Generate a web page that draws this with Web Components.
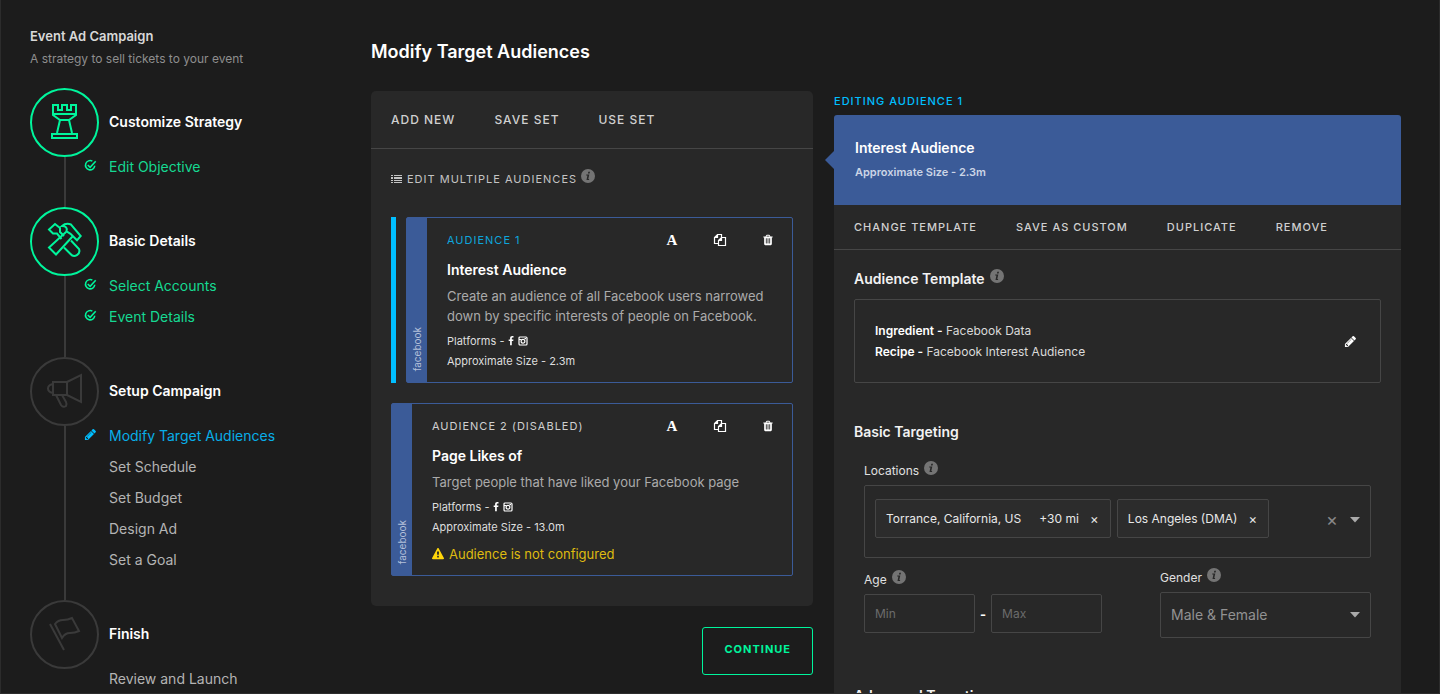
<!DOCTYPE html>
<html lang="en">
<head>
<meta charset="utf-8">
<meta name="viewport" content="width=device-width, initial-scale=1">
<title>Modify Target Audiences</title>
<style>
  :root {
    --bg: #1c1c1c;
    --panel: #282828;
    --line: #464646;
    --text: #c4c4c4;
    --muted: #8e8e8e;
    --green: #00f59c;
    --green-text: #16d992;
    --blue: #00bfff;
    --facebook: #3b5b98;
    --warn: #ffd60a;
  }

  body {
    margin: 0;
    background: var(--bg);
    color: var(--text);
    font: 13px/20px Inter, "Liberation Sans", sans-serif;
  }
</style>
</head>
<body>

<campaign-layout>
  <campaign-steps slot="steps" heading="Event Ad Campaign" summary="A strategy to sell tickets to your event">
    <step-group icon="rook" heading="Customize Strategy" done>
      <step-link state="done">Edit Objective</step-link>
    </step-group>
    <step-group icon="tools" heading="Basic Details" done>
      <step-link state="done">Select Accounts</step-link>
      <step-link state="done">Event Details</step-link>
    </step-group>
    <step-group icon="megaphone" heading="Setup Campaign">
      <step-link state="active">Modify Target Audiences</step-link>
      <step-link>Set Schedule</step-link>
      <step-link>Set Budget</step-link>
      <step-link>Design Ad</step-link>
      <step-link>Set a Goal</step-link>
    </step-group>
    <step-group icon="flag" heading="Finish">
      <step-link>Review and Launch</step-link>
    </step-group>
  </campaign-steps>

  <audience-list slot="list">
    <audience-card label="Audience 1" heading="Interest Audience" size="2.3m" selected>
      Create an audience of all Facebook users narrowed down by specific interests of people on Facebook.
    </audience-card>
    <audience-card label="Audience 2 (Disabled)" heading="Page Likes of" size="13.0m" warning="Audience is not configured">
      Target people that have liked your Facebook page
    </audience-card>
  </audience-list>

  <audience-editor slot="editor" label="Editing Audience 1" heading="Interest Audience" size="2.3m"></audience-editor>
</campaign-layout>

<script>
// ─── Icons ────────────────────────────────────────────────────────────────────

const ICONS = {
  // step icons, drawn on the 69px step circle
  rook: { box: "0 0 69 69", line: 2, body: `
    <path d="M23 17h5v5h4v-5h5v5h4v-5h5v10l-7 5h-9l-7-5z"/>
    <path d="M23 26h23M30 32l-3 13M39 32l3 13M22 46h25v4H22z"/>` },
  tools: { box: "0 0 69 69", line: 2, body: `
    <path d="M34 29l-4-4v-4l-5-4-6 5.500 4 4h4l4.500 5.500"/>
    <path d="M36 25L19 40.500l7 7L42.500 29.500M32 19q4-3.500 9-1.500l9.700 11.500-3.700 4.300-6.500-6.500-4-2.500q1.500-5-4.500-5.300z"/>
    <path d="M34 40.500l6.500 6.500a5 5 0 0 0 8.500-5l-8-8.500"/>` },
  megaphone: { box: "0 0 69 69", line: 2, body: `
    <path d="M23 25h14v13H23zM37 25l14-7v27l-14-7M23 27q-5 1-5 4.500t5 4.500"/>
    <path d="M26 38l5 10q2 3 5 1 1-2 0-4l-4-7"/>` },
  flag: { box: "0 0 69 69", line: 2, body: `
    <path d="M20 24l14 26M25 24q3-4 8-4t9-2l7 13q-4 2-9 2t-8 5z"/>` },

  check: { box: "0 0 14 14", line: 1.7, body: `
    <path d="M9 2.300a5 5 0 1 0 2.600 5M4 6.500l2.600 2.500 6-6.500"/>` },
  copy: { box: "0 0 14 14", line: 1.2, body: `
    <path d="M5.500 10.500h-4V4.500l3-3h4v3M4.500 1.500v3h-3"/>
    <path d="M5.500 7.500l3-3h4v8h-7zM8.500 4.500v3h-3"/>` },

  list: { box: "0 0 12 10", body: `
    <path d="M0 1h2v1H0zM0 3h2v2H0zM0 6h2v1H0zM0 8h2v1H0zM3 1h8v1H3zM3 3h8v2H3zM3 6h8v1H3zM3 8h8v1H3z"/>` },
  info: { box: "0 0 14 14", body: `
    <circle cx="7" cy="7" r="7"/>
    <path fill="#282828" d="M7.300 2.700h1.700l-.4 1.700H6.900zM5.300 5.500h3l-1 4.400h.9l-.2 1H5.500l.9-4.400h-1.200z"/>` },
  caret: { box: "0 0 10 6", body: `<path d="M0 0h10L5 5.500z"/>` },
  facebook: { box: "0 0 1792 1792", body: `
    <path d="M1343 12v264h-157q-86 0-116 36t-30 108v189h293l-39 296h-254v759h-306v-759h-255v-296h255v-218q0-186 104-288.500t277-102.500q147 0 228 12z"/>` },
  instagram: { box: "0 0 10 10", line: 1.2, body: `
    <rect x="1" y="1" width="8" height="8" rx="1"/>
    <circle cx="5" cy="5.300" r="1.900"/>
    <path d="M1 3.500h2.500M6.500 2.600H8"/>` },
  pencil: { box: "0 0 1792 1792", body: `
    <path d="M491 1536l91-91-235-235-91 91v107h128v128h107zm523-928q0-22-22-22-10 0-17 7l-542 542q-7 7-7 17 0 22 22 22 10 0 17-7l542-542q7-7 7-17zm-54-192l416 416-832 832h-416v-416zm683 96q0 53-37 90l-166 166-416-416 166-165q36-38 90-38 53 0 91 38l235 234q37 39 37 91z"/>` },
  trash: { box: "0 0 1792 1792", body: `
    <path d="M704 1376v-704q0-14-9-23t-23-9h-64q-14 0-23 9t-9 23v704q0 14 9 23t23 9h64q14 0 23-9t9-23zm256 0v-704q0-14-9-23t-23-9h-64q-14 0-23 9t-9 23v704q0 14 9 23t23 9h64q14 0 23-9t9-23zm256 0v-704q0-14-9-23t-23-9h-64q-14 0-23 9t-9 23v704q0 14 9 23t23 9h64q14 0 23-9t9-23zm-544-992h448l-48-117q-7-9-17-11h-317q-10 2-17 11zm928 32v64q0 14-9 23t-23 9h-96v948q0 83-47 143.500t-113 60.500h-832q-66 0-113-58.500t-47-141.500v-952h-96q-14 0-23-9t-9-23v-64q0-14 9-23t23-9h309l70-167q15-37 54-63t79-26h320q40 0 79 26t54 63l70 167h309q14 0 23 9t9 23z"/>` },
  warning: { box: "0 0 1792 1792", body: `
    <path d="M1024 1375v-190q0-14-9.500-23.500t-22.500-9.500h-192q-13 0-22.500 9.500t-9.500 23.500v190q0 14 9.500 23.500t22.500 9.500h192q13 0 22.500-9.500t9.500-23.500zm-2-374l18-459q0-12-10-19-13-11-24-11h-220q-11 0-24 11-10 7-10 21l17 457q0 10 10 16.500t24 6.500h185q14 0 23.500-6.500t10.500-16.500zm-14-934l768 1408q35 63-2 126-17 29-46.500 46t-63.500 17h-1536q-34 0-63.500-17t-46.500-46q-37-63-2-126l768-1408q17-31 47-49t65-18 65 18 47 49z"/>` },
};

/** use <ui-icon name="trash"></ui-icon>, sized with --icon-width / --icon-height */
class UiIcon extends HTMLElement {
  constructor() {
    super();
    this.attachShadow({ mode: "open" });
  }

  connectedCallback() {
    const icon = ICONS[this.getAttribute("name")];
    if (!icon) return;

    const paint = icon.line
      ? `fill="none" stroke="currentColor" stroke-width="${icon.line}"`
      : `fill="currentColor"`;

    this.shadowRoot.innerHTML = `
      <style>
        :host { display: inline-flex; flex-shrink: 0; }
        svg {
          display: block;
          width: var(--icon-width, 14px);
          height: var(--icon-height, var(--icon-width, 14px));
        }
      </style>
      <svg viewBox="${icon.box}" ${paint} aria-hidden="true">${icon.body}</svg>
    `;
  }
}

/** grey "i" that sits a little above the text before it */
class InfoTip extends HTMLElement {
  constructor() {
    super();
    this.attachShadow({ mode: "open" });
    this.shadowRoot.innerHTML = `
      <style>
        :host { display: inline-flex; align-self: flex-start; color: #747474; }
      </style>
      <ui-icon name="info"></ui-icon>
    `;
  }
}

// ─── Page frame ───────────────────────────────────────────────────────────────

class CampaignLayout extends HTMLElement {
  constructor() {
    super();
    this.attachShadow({ mode: "open" });
    this.shadowRoot.innerHTML = `
      <style>
        :host {
          box-sizing: border-box;
          display: grid;
          grid-template-columns: 320px minmax(0, 442fr) minmax(0, 567fr);
          column-gap: 21px;
          height: 100vh;
          padding: 0 38px 0 29px;
          border: 1px solid #2c2c2c;
          border-top: 0;
          overflow: hidden;
        }
      </style>
      <slot name="steps"></slot>
      <slot name="list"></slot>
      <slot name="editor"></slot>
    `;
  }
}

// ─── Steps ────────────────────────────────────────────────────────────────────

class CampaignSteps extends HTMLElement {
  constructor() {
    super();
    this.attachShadow({ mode: "open" });
  }

  connectedCallback() {
    this.shadowRoot.innerHTML = `
      <style>
        :host { display: block; padding-top: 26px; }
        h2, p { margin: 0; }
        h2 { font-size: 13px; font-weight: 600; color: #d8d8d8; }
        p { margin: 3px 0 19px; font-size: 12px; color: var(--muted); }
      </style>
      <h2>${this.getAttribute("heading")}</h2>
      <p>${this.getAttribute("summary")}</p>
      <nav><slot></slot></nav>
    `;
  }
}

class StepGroup extends HTMLElement {
  constructor() {
    super();
    this.attachShadow({ mode: "open" });
  }

  connectedCallback() {
    // the links start under the right edge of the circle, so both share column 2
    this.shadowRoot.innerHTML = `
      <style>
        :host {
          display: grid;
          grid-template-columns: 54px 25px 1fr;
          grid-template-rows: 63px auto;
          color: #3a3a3a;
        }
        :host([done]) { color: var(--green); }
        .rail {
          grid-area: 1 / 1 / 3 / 3;
          display: flex;
          flex-direction: column;
          width: 69px;
        }
        .circle {
          --icon-width: 69px;
          box-sizing: border-box;
          display: flex;
          align-items: center;
          justify-content: center;
          height: 69px;
          border: 2px solid;
          border-radius: 50%;
        }
        .line { flex: 1; width: 2px; margin-left: 34px; background: #3a3a3a; }
        h3 {
          grid-area: 1 / 3;
          align-self: center;
          margin: 0;
          padding-top: 5px;
          font-size: 14px;
          font-weight: 600;
          color: #fff;
        }
        .links {
          grid-area: 2 / 2 / 3 / 4;
          display: flex;
          flex-direction: column;
          padding-bottom: 25px;
        }
      </style>
      <div class="rail">
        <div class="circle"><ui-icon name="${this.getAttribute("icon")}"></ui-icon></div>
        <div class="line"></div>
      </div>
      <h3>${this.getAttribute("heading")}</h3>
      <div class="links"><slot></slot></div>
    `;

    if (!this.nextElementSibling) this.shadowRoot.querySelector(".line").remove();
  }
}

class StepLink extends HTMLElement {
  constructor() {
    super();
    this.attachShadow({ mode: "open" });
  }

  connectedCallback() {
    const mark = { done: "check", active: "pencil" }[this.getAttribute("state")];

    this.shadowRoot.innerHTML = `
      <style>
        :host { --icon-width: 13px; display: block; color: #b4b4b4; }
        :host([state="done"]) { color: var(--green-text); }
        :host([state="active"]) { color: #08aee8; }
        a {
          display: flex;
          align-items: center;
          height: 31px;
          font-size: 14px;
          color: inherit;
          text-decoration: none;
        }
        .mark { display: flex; width: 25px; padding-bottom: 2px; }
        :host([state="done"]) .mark { color: var(--green); }
        :host([state="active"]) .mark { color: var(--blue); }
      </style>
      <a href="#">
        <span class="mark">${mark ? `<ui-icon name="${mark}"></ui-icon>` : ""}</span>
        <slot></slot>
      </a>
    `;
  }
}

// ─── Toolbar ──────────────────────────────────────────────────────────────────

/** use <tool-bar items="One|Two"></tool-bar>, add small for the lower one */
class ToolBar extends HTMLElement {
  constructor() {
    super();
    this.attachShadow({ mode: "open" });
  }

  connectedCallback() {
    const items = this.getAttribute("items").split("|");

    this.shadowRoot.innerHTML = `
      <style>
        :host {
          display: flex;
          gap: 39px;
          height: 57px;
          padding: 0 20px;
          border-bottom: 1px solid var(--line);
          font-size: 12px;
        }
        :host([small]) { height: 44px; font-size: 11px; }
        button {
          padding: 0;
          border: 0;
          background: none;
          font: inherit;
          font-weight: 500;
          letter-spacing: 1px;
          text-transform: uppercase;
          white-space: nowrap;
          color: #d0d0d0;
          cursor: pointer;
        }
      </style>
      ${items.map(item => `<button type="button">${item}</button>`).join("")}
    `;
  }
}

// ─── Audience list ────────────────────────────────────────────────────────────

class AudienceList extends HTMLElement {
  constructor() {
    super();
    this.attachShadow({ mode: "open" });
    this.shadowRoot.innerHTML = `
      <style>
        :host { display: flex; flex-direction: column; padding-top: 40px; }
        h1 { margin: 0 0 27px; font-size: 18px; line-height: 24px; font-weight: 600; color: #fff; }
        .panel { border-radius: 5px; background: var(--panel); }
        .multi { display: flex; gap: 4px; padding: 20px 20px 28px; }
        .multi button {
          --icon-width: 12px;
          --icon-height: 10px;
          display: flex;
          align-items: center;
          gap: 4px;
          padding: 0;
          border: 0;
          background: none;
          font: inherit;
          font-size: 11px;
          letter-spacing: 1px;
          text-transform: uppercase;
          color: var(--text);
          cursor: pointer;
        }
        .cards { display: flex; flex-direction: column; gap: 20px; padding: 0 20px 30px; }
        .continue {
          align-self: flex-end;
          height: 48px;
          margin-top: 21px;
          padding: 0 21px 4px;
          border: 1px solid var(--green);
          border-radius: 3px;
          background: none;
          font: inherit;
          font-size: 11px;
          font-weight: 700;
          letter-spacing: 1px;
          text-transform: uppercase;
          color: var(--green);
          cursor: pointer;
        }
      </style>
      <h1>Modify Target Audiences</h1>
      <div class="panel">
        <tool-bar items="Add New|Save Set|Use Set"></tool-bar>
        <div class="multi">
          <button type="button"><ui-icon name="list"></ui-icon>Edit Multiple Audiences</button>
          <info-tip></info-tip>
        </div>
        <div class="cards"><slot></slot></div>
      </div>
      <button class="continue" type="button">Continue</button>
    `;
  }
}

class AudienceCard extends HTMLElement {
  constructor() {
    super();
    this.attachShadow({ mode: "open" });
  }

  connectedCallback() {
    const warning = this.getAttribute("warning");

    this.shadowRoot.innerHTML = `
      <style>
        :host { display: block; }
        :host([selected]) { padding-left: 10px; border-left: 5px solid var(--blue); }
        article {
          display: flex;
          border: 1px solid var(--facebook);
          border-radius: 2px;
        }
        .source {
          display: flex;
          align-items: center;
          width: 20px;
          padding-bottom: 11px;
          box-sizing: border-box;
          justify-content: flex-end;
          flex-direction: column;
          background: var(--facebook);
          color: #b3c0da;
          font-size: 10px;
        }
        .source span { writing-mode: vertical-rl; rotate: 180deg; }
        .body { flex: 1; min-width: 0; padding: 12px 0 11px 20px; }
        header { display: flex; justify-content: space-between; height: 20px; }
        .label {
          font-size: 11px;
          letter-spacing: 1px;
          text-transform: uppercase;
          color: #d0d0d0;
        }
        :host([selected]) .label { color: #0ea5dc; }
        .actions { display: flex; }
        .actions button {
          --icon-width: 14px;
          display: flex;
          align-items: center;
          justify-content: center;
          width: 48px;
          padding: 0;
          border: 0;
          background: none;
          color: #fff;
          cursor: pointer;
        }
        .actions button.type { font: bold 15px/20px "Liberation Serif", serif; }
        .actions button.remove { --icon-width: 12px; }
        h3 { margin: 10px 0 6px; font-size: 14px; line-height: 20px; font-weight: 600; color: #fff; }
        p { margin: 0; }
        .about { max-width: 320px; margin-bottom: 5px; color: #ababab; }
        .meta {
          --icon-width: 10px;
          display: flex;
          align-items: center;
          gap: 2px;
          font-size: 11px;
          color: #dedede;
        }
        .meta ui-icon { color: #fff; }
        .warning {
          --icon-width: 12px;
          display: flex;
          align-items: center;
          gap: 5px;
          margin-top: 7px;
          color: #dfbb10;
        }
        .warning ui-icon { color: var(--warn); }
      </style>
      <article>
        <div class="source"><span>facebook</span></div>
        <div class="body">
          <header>
            <span class="label">${this.getAttribute("label")}</span>
            <div class="actions">
              <button class="type" type="button">A</button>
              <button type="button" aria-label="Duplicate"><ui-icon name="copy"></ui-icon></button>
              <button class="remove" type="button" aria-label="Remove"><ui-icon name="trash"></ui-icon></button>
            </div>
          </header>
          <h3>${this.getAttribute("heading")}</h3>
          <p class="about"><slot></slot></p>
          <p class="meta">Platforms - <ui-icon name="facebook"></ui-icon><ui-icon name="instagram"></ui-icon></p>
          <p class="meta">Approximate Size - ${this.getAttribute("size")}</p>
          ${warning ? `<p class="warning"><ui-icon name="warning"></ui-icon>${warning}</p>` : ""}
        </div>
      </article>
    `;
  }
}

// ─── Audience editor ──────────────────────────────────────────────────────────

/** use <tag-chip note="+30 mi">Torrance</tag-chip> */
class TagChip extends HTMLElement {
  constructor() {
    super();
    this.attachShadow({ mode: "open" });
  }

  connectedCallback() {
    const note = this.getAttribute("note");

    this.shadowRoot.innerHTML = `
      <style>
        :host {
          box-sizing: border-box;
          display: flex;
          align-items: center;
          height: 39px;
          padding-left: 10px;
          border: 1px solid var(--line);
          border-radius: 2px;
          background: #2c2c2c;
          font-size: 12px;
          white-space: nowrap;
          color: #e8e8e8;
        }
        .note { margin-left: 18px; }
        button {
          width: 31px;
          padding: 0;
          border: 0;
          background: none;
          font: inherit;
          font-size: 13px;
          color: inherit;
          cursor: pointer;
        }
      </style>
      <slot></slot>
      ${note ? `<span class="note">${note}</span>` : ""}
      <button type="button">×</button>
    `;
  }
}

class AudienceEditor extends HTMLElement {
  constructor() {
    super();
    this.attachShadow({ mode: "open" });
  }

  connectedCallback() {
    this.shadowRoot.innerHTML = `
      <style>
        :host { display: flex; flex-direction: column; padding-top: 91px; }
        h2, h3, p { margin: 0; }
        .label {
          margin-bottom: 4px;
          font-size: 11px;
          font-weight: 500;
          letter-spacing: 1px;
          text-transform: uppercase;
          color: var(--blue);
        }
        .head {
          position: relative;
          padding: 23px 21px;
          border-radius: 3px 3px 0 0;
          background: var(--facebook);
        }
        /* pointer towards the selected card */
        .head::before {
          content: "";
          position: absolute;
          right: 100%;
          top: 36px;
          border: 9px solid transparent;
          border-right-color: var(--facebook);
          border-left: 0;
        }
        h2 { margin-bottom: 4px; font-size: 14px; line-height: 20px; font-weight: 600; color: #fff; }
        .head p { font-size: 11px; font-weight: 600; color: #ccd5e6; }
        .sheet { flex: 1; background: var(--panel); }
        .sections { display: flex; flex-direction: column; padding: 19px 20px 40px; }
        h3 {
          display: flex;
          gap: 5px;
          font-size: 14px;
          line-height: 20px;
          font-weight: 600;
          color: #f2f2f2;
        }
        .template {
          display: flex;
          align-items: center;
          justify-content: space-between;
          margin: 10px 0 39px;
          padding: 20px;
          border: 1px solid var(--line);
          border-radius: 2px;
          font-size: 12px;
          line-height: 21px;
          color: #dadada;
        }
        .template b { font-weight: 600; color: #fff; }
        button {
          padding: 0;
          border: 0;
          background: none;
          font: inherit;
          color: inherit;
          cursor: pointer;
        }
        .template button { --icon-width: 13px; display: flex; padding: 0 3px; color: #fff; }
        .fields { display: flex; flex-direction: column; gap: 10px; padding: 19px 10px 48px; }
        .caption { display: flex; gap: 5px; margin-bottom: 4px; font-size: 12px; color: #e0e0e0; }
        .row { display: flex; justify-content: space-between; }
        .tags {
          display: flex;
          align-items: flex-start;
          gap: 6px;
          padding: 13px 10px 17px;
          border: 1px solid var(--line);
          border-radius: 2px;
        }
        .tags input { flex: 1; width: 0; min-width: 0; height: 39px; padding: 0; border: 0; }
        .ends { display: flex; align-items: center; gap: 12px; height: 41px; color: #a0a0a0; }
        .ends button { font-size: 18px; color: #888; }
        ui-icon.caret { --icon-width: 10px; --icon-height: 6px; color: #aaa; }
        input, select {
          box-sizing: border-box;
          border: 1px solid var(--line);
          border-radius: 2px;
          outline: 0;
          background: none;
          font: inherit;
          color: #e8e8e8;
        }
        .age { padding-top: 2px; }
        .range { display: flex; align-items: center; gap: 5px; font-weight: 700; color: #fff; }
        .range input { width: 111px; height: 39px; padding: 0 10px; font-size: 12px; font-weight: 400; }
        ::placeholder { color: #6c6c6c; opacity: 1; }
        .gender { width: 211px; }
        .pick { display: grid; align-items: center; }
        .pick > * { grid-area: 1 / 1; }
        select {
          appearance: none;
          width: 100%;
          height: 46px;
          padding: 0 30px 0 10px;
          font-size: 14px;
          color: #929292;
        }
        .pick ui-icon { justify-self: end; margin-right: 11px; pointer-events: none; }
      </style>
      <p class="label">${this.getAttribute("label")}</p>
      <div class="head">
        <h2>${this.getAttribute("heading")}</h2>
        <p>Approximate Size - ${this.getAttribute("size")}</p>
      </div>
      <div class="sheet">
        <tool-bar small items="Change Template|Save As Custom|Duplicate|Remove"></tool-bar>
        <div class="sections">
          <h3>Audience Template <info-tip></info-tip></h3>
          <div class="template">
            <div>
              <p><b>Ingredient -</b> Facebook Data</p>
              <p><b>Recipe -</b> Facebook Interest Audience</p>
            </div>
            <button type="button" aria-label="Edit template"><ui-icon name="pencil"></ui-icon></button>
          </div>

          <h3>Basic Targeting</h3>
          <div class="fields">
            <div>
              <div class="caption"><label for="locations">Locations</label><info-tip></info-tip></div>
              <div class="tags">
                <tag-chip note="+30 mi">Torrance, California, US</tag-chip>
                <tag-chip>Los Angeles (DMA)</tag-chip>
                <input id="locations" type="text">
                <div class="ends">
                  <button type="button">×</button>
                  <ui-icon class="caret" name="caret"></ui-icon>
                </div>
              </div>
            </div>
            <div class="row">
              <div class="age">
                <div class="caption"><label for="age-min">Age</label><info-tip></info-tip></div>
                <div class="range">
                  <input id="age-min" type="text" inputmode="numeric" placeholder="Min">
                  -
                  <input type="text" inputmode="numeric" placeholder="Max" aria-label="Maximum age">
                </div>
              </div>
              <div class="gender">
                <div class="caption"><label for="gender">Gender</label><info-tip></info-tip></div>
                <div class="pick">
                  <select id="gender">
                    <option>Male &amp; Female</option>
                    <option>Male</option>
                    <option>Female</option>
                  </select>
                  <ui-icon class="caret" name="caret"></ui-icon>
                </div>
              </div>
            </div>
          </div>

          <h3>Advanced Targeting</h3>
        </div>
      </div>
    `;
  }
}

customElements.define("ui-icon", UiIcon);
customElements.define("info-tip", InfoTip);
customElements.define("campaign-layout", CampaignLayout);
customElements.define("campaign-steps", CampaignSteps);
customElements.define("step-group", StepGroup);
customElements.define("step-link", StepLink);
customElements.define("tool-bar", ToolBar);
customElements.define("audience-list", AudienceList);
customElements.define("audience-card", AudienceCard);
customElements.define("tag-chip", TagChip);
customElements.define("audience-editor", AudienceEditor);
</script>
</body>
</html>
